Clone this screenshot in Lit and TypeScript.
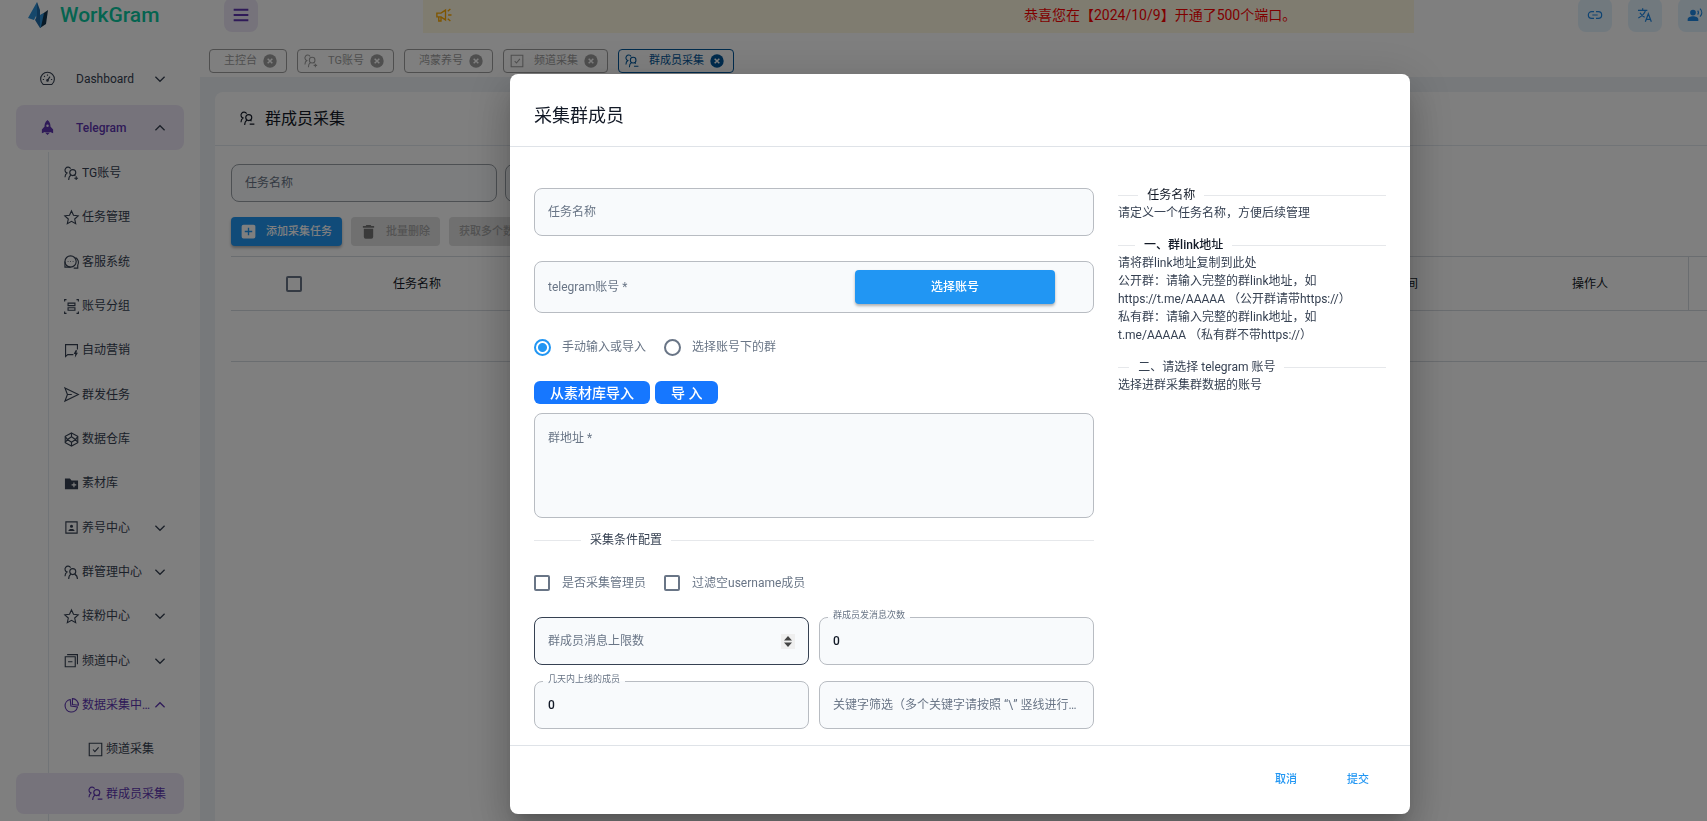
import { LitElement, html, css, svg, nothing } from "lit";
import { customElement, property, state } from "lit/decorators.js";
import { classMap } from "lit/directives/class-map.js";

const person = svg`
  <path d="M10.500 4.200a4.800 4.800 0 1 0-5.700 7C2.900 12.500 1.600 14.500 1.600 18"/>
  <circle cx="14" cy="10.500" r="4.800"/>
  <path d="M11.300 14.600c-2.300 1.200-3.800 3.600-3.800 7.900"/>`;

const ICONS: Record<string, unknown> = {
  gauge: svg`<path d="M5 21.500a11 11 0 1 1 14 0zM12 15l4-6M4.500 13.500h2M12 5.500v2M6.500 8l1.300 1.300M17.500 13.500h2"/><circle cx="12" cy="15" r="1.200"/>`,
  rocket: svg`<path class="solid" d="M12 0c4 3 5 7 4.700 10.500l4.300 4.500v6l-4.800-2H7.800L3 21v-6l4.300-4.500C7 7 8 3 12 0zm0 7a2 2 0 1 0 0 4 2 2 0 0 0 0-4zM8 20h8l-4 4z"/>`,
  userPlus: svg`${person}<path d="M16.300 14.500c.8.400 1.300.8 1.800 1.300M19.500 16.500v6M16.500 19.500h6"/>`,
  userMinus: svg`${person}<path d="M16.300 14.500c.9.500 1.500 1.100 2 2M15.500 21h7.500"/>`,
  users: svg`${person}<path d="M17 14.600c2.500 1.200 4.500 4 4.500 7.900"/>`,
  star: svg`<path d="M12 1.500l3.200 6.900 7.500.9-5.600 5.100 1.600 7.500L12 18.100l-6.700 3.800 1.600-7.500L1.300 9.300l7.500-.9z"/>`,
  chat: svg`<circle cx="10.500" cy="12" r="9"/><path d="M1.500 12v9h9M18.500 5.500c5 3 5.500 9 3.500 12.500v4.500h-6.500"/><path d="M6 12h1M10 12h1M14 12h1"/>`,
  group: svg`<path d="M6.500 6.500h11v4h-11zM6.500 14h11v4h-11z"/><path d="M1 4V1H4M20 1h3V4M23 20v3H20M4 23H1V20"/>`,
  promo: svg`<path d="M21.500 10.500V2.500H2.500v19l3.500-3h9"/><path class="solid" d="M18.500 11.500l-3 6h2.500l-.7 6 5-8h-2.500l1.200-4z"/>`,
  send: svg`<path d="M1.500 1.500L23 12 1.500 22.500 5.500 12zM5.500 12h7"/>`,
  gem: svg`<path d="M12 1.500l10 5.500v10L12 22.500 2 17V7z"/><path d="M12 7.500l6.500 4.500-6.500 4.500L5.500 12zM12 1.500v6M12 16.500v6M2 7.500L5.500 12 2 16.500M22 7.500L18.500 12l3.500 4.500"/>`,
  folder: svg`<path class="solid" fill-rule="evenodd" d="M1.500 4h8l2.500 3h10.500v14h-21zM15 10.500v2.800h-2.800v1.800H15v2.800h1.800v-2.800h2.800v-1.800h-2.800v-2.800z"/>`,
  badge: svg`<path d="M3 3h18v18H3z"/><path class="solid" d="M12 7.500a2.500 2.500 0 1 1 0 5 2.500 2.500 0 0 1 0-5zM7 17.500c.5-2.500 2-3.300 5-3.300s4.500.8 5 3.300z"/>`,
  stack: svg`<path d="M2 6h16v16H2zM5 2.500h16.500V18M6.500 14h7"/>`,
  pie: svg`<path d="M10 2.500a10 10 0 1 0 11.500 12L11 13zM13.500 1v9.500l9.500 1c.2-5.800-3.800-10.300-9.500-10.500z"/>`,
  check: svg`<path d="M2 2h20v20H2z"/><path d="M8 12l3 3.500L17 8.500"/>`,
  down: svg`<path class="bold" d="M1 6.500L12 17.500 23 6.500"/>`,
  up: svg`<path class="bold" d="M1 17.500L12 6.500 23 17.500"/>`,
  menu: svg`<path class="bold" d="M1 4h22M1 12h22M1 20h22"/>`,
  horn: svg`<path d="M2.500 9.500H8l6-4v13l-6-4H2.500zM5 14.500V20h3v-5.500M17.500 12H22M17 7l3.500-3M17 17l3.500 3"/>`,
  link: svg`<path d="M10.500 7H7a5 5 0 0 0 0 10h3.500M13.500 7H17a5 5 0 0 1 0 10h-3.500M8 12h8"/>`,
  translate: svg`<path d="M1.500 5h14M8.500 2v3M12.800 5C11.500 9.500 7.500 13.500 2 16.500M4.500 8.500c1.500 3 4 5.500 7 7M12.500 22l4.500-12 4.500 12M14 18.500h6"/>`,
  voice: svg`<path class="solid" d="M9 4a4.300 4.300 0 1 1 0 8.600A4.300 4.300 0 0 1 9 4zM1 21v-2.500c0-3 4-4.500 8-4.500s8 1.500 8 4.500V21z"/><path d="M16 5.500c1.500 1.800 1.500 4 0 5.800M19.500 2.500c3.500 3.500 3.500 8.500 0 12"/>`,
  close: svg`<circle class="solid" cx="12" cy="12" r="11.500"/><path class="knock" d="M8 8l8 8M16 8l-8 8"/>`,
  add: svg`<path class="solid" fill-rule="evenodd" d="M4 1h16a3 3 0 0 1 3 3v16a3 3 0 0 1-3 3H4a3 3 0 0 1-3-3V4a3 3 0 0 1 3-3zM10.900 6v4.900H6v2.200h4.900V18h2.200v-4.900H18v-2.200h-4.900V6z"/>`,
  trash: svg`<path class="solid" d="M8.500 1.500h7l1 1.500H21v3H3V3h4.500zM4.500 7.500h15v13a3 3 0 0 1-3 3h-9a3 3 0 0 1-3-3z"/>`,
};

@customElement("ui-icon")
export class UiIcon extends LitElement {
  @property() name = "star";
  static styles = css`
    :host { display: inline-flex; flex: none; width: 15px; height: 15px; }
    svg { width: 100%; height: 100%; fill: none; stroke: currentColor; stroke-width: 1.800; overflow: visible; }
    .solid { fill: currentColor; stroke: none; }
    .bold { stroke-width: 3; }
    .knock { stroke: #fff; stroke-width: 2.600; }
  `;
  render() {
    return html`<svg viewBox="0 0 24 24" aria-hidden="true">${ICONS[this.name]}</svg>`;
  }
}

type NavItem = { label: string; icon: string; arrow?: "up" | "down"; nested?: boolean; tone?: "open" | "current" };

const NAV: NavItem[] = [
  { label: "TG账号", icon: "userPlus" },
  { label: "任务管理", icon: "star" },
  { label: "客服系统", icon: "chat" },
  { label: "账号分组", icon: "group" },
  { label: "自动营销", icon: "promo" },
  { label: "群发任务", icon: "send" },
  { label: "数据仓库", icon: "gem" },
  { label: "素材库", icon: "folder" },
  { label: "养号中心", icon: "badge", arrow: "down" },
  { label: "群管理中心", icon: "users", arrow: "down" },
  { label: "接粉中心", icon: "star", arrow: "down" },
  { label: "频道中心", icon: "stack", arrow: "down" },
  { label: "数据采集中心", icon: "pie", arrow: "up", tone: "open" },
  { label: "频道采集", icon: "check", nested: true },
  { label: "群成员采集", icon: "userMinus", nested: true, tone: "current" },
];

@customElement("app-sidebar")
export class AppSidebar extends LitElement {
  static styles = css`
    :host { display: flex; flex-direction: column; min-height: 100vh; box-sizing: border-box; background: #fff; color: #364152; font-size: 12px; line-height: 16px; }
    a { color: inherit; text-decoration: none; }
    .brand { display: flex; align-items: center; gap: 12px; height: 30px; padding-left: 28px; color: #0ac8a0; font-size: 21px; font-weight: 500; line-height: 30px; }
    .brand svg { width: 20px; height: 26px; }
    .top { display: grid; gap: 4px; padding: 26px 16px 0; }
    .entry { display: flex; align-items: center; gap: 21px; height: 45px; padding: 0 19px 0 24px; border-radius: 8px; }
    .entry span { flex: 1; }
    .entry.active { background: #ede7f6; color: #5e35b1; font-weight: 500; }
    .arrow { width: 10px; height: 10px; color: #364152; }
    .list { position: relative; flex: 1; display: grid; grid-template-columns: minmax(0, 1fr); grid-auto-rows: minmax(41px, 1fr); margin: 0; padding: 1px 16px 5px; list-style: none; }
    .list::before { content: ""; position: absolute; left: 48px; top: 2px; bottom: 0; width: 1px; background: #e3e8ef; }
    .list li { display: grid; grid-template-columns: minmax(0, 1fr); align-items: center; position: relative; }
    .item { display: flex; align-items: center; gap: 3px; height: 41px; padding: 0 19px 0 48px; border-radius: 8px; }
    .item span { flex: 1; min-width: 0; overflow: hidden; text-overflow: ellipsis; white-space: nowrap; }
    .nested { padding: 0 8px 0 72px; }
    .open, .open .arrow { color: #5e35b1; }
    .current { background: #ede7f6; color: #5e35b1; }
  `;
  render() {
    return html`
      <a class="brand" href="#">
        <svg viewBox="0 0 20 26" aria-hidden="true">
          <path fill="#2a8fd6" d="M9 0L0 16l6 2 2-4 3 8z" />
          <path fill="#1f6aa8" d="M9 0l3 8v18l-5-8 2-4z" />
          <path fill="#12344f" d="M20 8l-7 5-1 13 6-4z" />
          <path fill="#2a8fd6" d="M12 13l4-2-3 14-1 1z" />
        </svg>
        WorkGram
      </a>
      <nav class="top" aria-label="main">
        <a class="entry" href="#"><ui-icon name="gauge"></ui-icon><span>Dashboard</span><ui-icon class="arrow" name="down"></ui-icon></a>
        <a class="entry active" href="#"><ui-icon name="rocket"></ui-icon><span>Telegram</span><ui-icon class="arrow" name="up"></ui-icon></a>
      </nav>
      <ul class="list">
        ${NAV.map(
          (n) => html`<li>
            <a href="#" class=${classMap({ item: true, nested: !!n.nested, open: n.tone === "open", current: n.tone === "current" })}>
              <ui-icon name=${n.icon}></ui-icon><span>${n.label}</span>
              ${n.arrow ? html`<ui-icon class="arrow" name=${n.arrow}></ui-icon>` : nothing}
            </a>
          </li>`,
        )}
      </ul>
    `;
  }
}

const TABS = [
  { label: "主控台", icon: "" },
  { label: "TG账号", icon: "userPlus" },
  { label: "鸿蒙养号", icon: "" },
  { label: "频道采集", icon: "check" },
  { label: "群成员采集", icon: "userMinus", active: true },
];

@customElement("app-workspace")
export class AppWorkspace extends LitElement {
  static styles = css`
    :host { display: flex; flex-direction: column; min-width: 0; overflow: hidden; background: #eef2f6; color: #121926; font-size: 12px; line-height: 16px; }
    button { font: inherit; border: 0; cursor: pointer; }
    .bar { display: grid; grid-template-columns: 223px minmax(0, 1fr) 293px; grid-template-rows: 33px; align-items: end; background: #fff; }
    .square { display: grid; place-items: center; width: 34px; height: 34px; padding: 0; border-radius: 8px; background: #ede7f6; color: #5e35b1; margin-bottom: 1px; }
    .menu { margin-left: 24px; }
    .notice { display: flex; align-items: center; height: 33px; box-sizing: border-box; padding-bottom: 4px; background: #fff8e1; color: #f00; font-size: 14px; line-height: 20px; overflow: hidden; white-space: nowrap; }
    .horn { width: 18px; height: 18px; margin: 0 571px 0 12px; color: #ffab00; }
    .tools { display: flex; gap: 16px; justify-content: flex-end; margin-right: -5px; }
    .tools .square { background: #e3f2fd; color: #1e88e5; }
    .tools ui-icon, .menu ui-icon { width: 16px; height: 16px; }
    .tabs { display: flex; gap: 10px; padding: 16px 9px 4px; background: #fff; }
    .tab { display: flex; align-items: center; gap: 6px; height: 24px; box-sizing: border-box; padding: 0 9px 0 6px; border: 1px solid #9e9e9e; border-radius: 4px; color: #9e9e9e; font-size: 11px; }
    .tab .text { padding-left: 8px; }
    .tab ui-icon + .text { padding-left: 4px; }
    .tab.active { border-color: #01579b; color: #01579b; }
    .tab ui-icon { width: 14px; height: 14px; }
    .tab button { display: flex; padding: 0; background: none; color: inherit; }
    .card { flex: 1; margin: 15px 0 0 15px; border-radius: 8px 0 0 0; background: #fff; }
    .head { display: flex; align-items: center; gap: 10px; height: 53px; padding-left: 25px; border-bottom: 1px solid #e3e8ef; }
    h1 { margin: 0; font-size: 16px; font-weight: 400; line-height: 24px; }
    .filters { display: flex; gap: 8px; padding: 18px 16px 15px; }
    .filters input { width: 266px; height: 38px; box-sizing: border-box; padding: 0 13px; border: 1px solid #9aa0a6; border-radius: 8px; background: #f8fafc; font: inherit; }
    .filters input::placeholder { color: #697586; opacity: 1; }
    .actions { display: flex; gap: 9px; padding: 0 16px 10px; }
    .actions button { display: flex; align-items: center; gap: 10px; height: 29px; padding: 0 10px; border-radius: 4px; background: #2196f3; color: #fff; font-size: 11px; font-weight: 500; box-shadow: 0 2px 3px rgba(0, 0, 0, 0.3); white-space: nowrap; }
    .actions button:disabled { background: #e0e0e0; color: #a6a6a6; box-shadow: none; }
    .actions button:disabled ui-icon { color: #757575; }
    .scroll { margin-left: 16px; }
    table { width: 100%; border-collapse: collapse; table-layout: fixed; }
    th, td { padding: 0; border-bottom: 1px solid #d5dae0; text-align: center; font-weight: 400; }
    th { height: 53px; border-top: 1px solid #d5dae0; }
    td { height: 50px; }
    .pick { width: 126px; }
    .name { width: 120px; }
    .col { width: 196px; }
    .tail { width: 18px; border-left: 1px solid #d5dae0; }
    input[type="checkbox"] { appearance: none; display: block; width: 16px; height: 16px; margin: auto; border: 2px solid #697586; border-radius: 2px; background: #fff; }
  `;
  render() {
    return html`
      <header class="bar">
        <button class="square menu" aria-label="menu"><ui-icon name="menu"></ui-icon></button>
        <div class="notice"><ui-icon class="horn" name="horn"></ui-icon><span>恭喜您在【2024/10/9】开通了500个端口。</span></div>
        <div class="tools">
          ${["link", "translate", "voice"].map((i) => html`<button class="square" aria-label=${i}><ui-icon name=${i}></ui-icon></button>`)}
        </div>
      </header>
      <div class="tabs">
        ${TABS.map(
          (t) => html`<div class=${classMap({ tab: true, active: !!t.active })}>
            ${t.icon ? html`<ui-icon name=${t.icon}></ui-icon>` : nothing}<span class="text">${t.label}</span>
            <button aria-label="close"><ui-icon name="close"></ui-icon></button>
          </div>`,
        )}
      </div>
      <main class="card">
        <div class="head"><ui-icon name="userMinus"></ui-icon><h1>群成员采集</h1></div>
        <div class="filters">
          <input placeholder="任务名称" aria-label="任务名称" />
          <input aria-label="filter" />
        </div>
        <div class="actions">
          <button><ui-icon name="add"></ui-icon>添加采集任务</button>
          <button disabled><ui-icon name="trash"></ui-icon>批量删除</button>
          <button disabled>获取多个数据</button>
        </div>
        <div class="scroll">
          <table>
            <thead>
              <tr>
                <th class="pick"><input type="checkbox" aria-label="select all" /></th>
                <th class="name">任务名称</th><th></th><th class="col">创建时间</th><th class="col">操作人</th><th class="tail"></th>
              </tr>
            </thead>
            <tbody><tr><td colspan="6"></td></tr></tbody>
          </table>
        </div>
      </main>
    `;
  }
}

@customElement("ui-divider")
export class UiDivider extends LitElement {
  static styles = css`
    :host { display: flex; align-items: center; gap: 9px; white-space: nowrap; line-height: 18px; }
    :host::before, :host::after { content: ""; height: 1px; background: #e6e8eb; }
    :host::before { flex: 1 1 0; }
    :host::after { flex: 9 1 0; }
  `;
  render() {
    return html`<slot></slot>`;
  }
}

@customElement("collect-dialog")
export class CollectDialog extends LitElement {
  @state() private source = "manual";
  static styles = css`
    :host { display: flex; flex-direction: column; box-sizing: border-box; width: 900px; max-width: 100%; border-radius: 8px; background: #fff; color: #364152; font-size: 12px; line-height: 18px; box-shadow: 0 11px 15px -7px rgba(0, 0, 0, 0.2), 0 24px 38px 3px rgba(0, 0, 0, 0.14), 0 9px 46px 8px rgba(0, 0, 0, 0.12); }
    button, input, textarea { font: inherit; }
    button { border: 0; cursor: pointer; }
    h2 { margin: 0; padding: 29px 24px 17px; color: #121926; font-size: 18px; font-weight: 400; line-height: 26px; }
    .body { display: grid; grid-template-columns: 560fr 268fr; gap: 24px; padding: 41px 24px 16px; border-top: 1px solid #dfe3e8; border-bottom: 1px solid #dfe3e8; color: #697586; }
    .field { position: relative; display: flex; align-items: center; height: 48px; box-sizing: border-box; border: 1px solid #b8bcc2; border-radius: 8px; background: #f8fafc; }
    .field label { position: absolute; left: 13px; right: 11px; overflow: hidden; text-overflow: ellipsis; white-space: nowrap; pointer-events: none; }
    .field input, .field textarea { flex: 1; min-width: 0; height: 100%; box-sizing: border-box; padding: 0 13px; border: 0; outline: 0; background: none; color: #121926; font-weight: 500; resize: none; appearance: textfield; }
    input::-webkit-inner-spin-button { display: none; }
    .field .float { top: -12px; left: 8px; right: auto; padding: 0 5px; background: linear-gradient(#fff 11px, #f8fafc 11px); font-size: 9px; }
    .account { height: 52px; margin: 25px 0; padding-right: 38px; }
    .pickbtn { width: 200px; height: 34px; margin-bottom: 1px; border-radius: 4px; background: #2196f3; color: #fff; font-weight: 500; box-shadow: 0 2px 3px rgba(0, 0, 0, 0.3); }
    .choices { display: flex; gap: 18px; }
    .choices label { display: flex; align-items: center; gap: 11px; }
    .choices input { appearance: none; flex: none; box-sizing: border-box; width: 17px; height: 17px; margin: 0; border: 2px solid #697586; border-radius: 50%; }
    .choices input[type="checkbox"] { width: 16px; height: 16px; margin-right: 1px; border-radius: 2px; }
    .choices input[type="radio"]:checked { border-color: #2196f3; background: radial-gradient(#2196f3 4px, transparent 5px); }
    .imports { display: flex; gap: 5px; padding: 25px 0 9px; }
    .imports button { height: 23px; padding: 0 16px; border-radius: 6px; background: #1677ff; color: #fff; font-size: 14px; font-weight: 500; line-height: 20px; }
    .address { height: 105px; }
    .address label { top: 15px; }
    .form ui-divider { margin: 13px 0 25px; color: #364152; }
    .flags { padding-bottom: 25px; }
    .pair { display: grid; grid-template-columns: 1fr 1fr; gap: 16px 10px; }
    .focus { border-color: #364152; }
    .spin { position: absolute; right: 13px; width: 14px; height: 15px; background: #efefef; }
    .help { margin-top: -2px; color: #364152; }
    .help p { margin: 0 0 14px; padding-right: 8px; }
    .help ui-divider { color: #121926; }
    .help .strong { font-weight: 500; }
    .help .soft { color: #364152; }
    footer { display: flex; justify-content: flex-end; gap: 24px; padding: 16px 28px 17px; }
    footer button { width: 48px; height: 35px; padding: 0; background: none; color: #2196f3; font-size: 11px; font-weight: 500; }
  `;
  private num(id: string, label: string, value: string) {
    return html`<div class="field"><label class="float" for=${id}>${label}</label><input id=${id} type="number" .value=${value} /></div>`;
  }
  private radio(value: string, label: string) {
    return html`<label><input type="radio" name="source" .checked=${this.source === value} @change=${() => (this.source = value)} />${label}</label>`;
  }
  render() {
    return html`
      <h2>采集群成员</h2>
      <div class="body">
        <form class="form">
          <div class="field"><label for="task">任务名称</label><input id="task" /></div>
          <div class="field account">
            <label for="account">telegram账号 *</label><input id="account" />
            <button type="button" class="pickbtn">选择账号</button>
          </div>
          <div class="choices">${this.radio("manual", "手动输入或导入")}${this.radio("account", "选择账号下的群")}</div>
          <div class="imports"><button type="button">从素材库导入</button><button type="button">导 入</button></div>
          <div class="field address"><label for="address">群地址 *</label><textarea id="address"></textarea></div>
          <ui-divider>采集条件配置</ui-divider>
          <div class="choices flags">
            <label><input type="checkbox" />是否采集管理员</label>
            <label><input type="checkbox" />过滤空username成员</label>
          </div>
          <div class="pair">
            <div class="field focus">
              <label for="limit">群成员消息上限数</label><input id="limit" type="number" />
              <svg class="spin" viewBox="0 0 14 15" aria-hidden="true"><path fill="#444" d="M3 6.500L7 2l4 4.500zM3 8.500L7 13l4-4.500z" /></svg>
            </div>
            ${this.num("times", "群成员发消息次数", "0")} ${this.num("days", "几天内上线的成员", "0")}
            <div class="field"><label for="words">关键字筛选（多个关键字请按照 “\\” 竖线进行分割）</label><input id="words" /></div>
          </div>
        </form>
        <aside class="help">
          <ui-divider>任务名称</ui-divider>
          <p>请定义一个任务名称，方便后续管理</p>
          <ui-divider class="strong">一、群link地址</ui-divider>
          <p>请将群link地址复制到此处<br />公开群：请输入完整的群link地址，如<br />https://t.me/AAAAA （公开群请带https://）<br />私有群：请输入完整的群link地址，如<br />t.me/AAAAA （私有群不带https://）</p>
          <ui-divider class="soft">二、请选择 telegram 账号</ui-divider>
          <p>选择进群采集群数据的账号</p>
        </aside>
      </div>
      <footer><button>取消</button><button>提交</button></footer>
    `;
  }
}

@customElement("app-root")
export class AppRoot extends LitElement {
  static styles = css`
    :host { display: block; height: 100vh; overflow: hidden; font-family: Roboto, "Noto Sans CJK SC", sans-serif; }
    .shell { display: grid; grid-template-columns: 200px minmax(0, 1fr); min-height: 100vh; }
    .backdrop { position: fixed; inset: 0; display: flex; justify-content: center; align-items: flex-start; box-sizing: border-box; padding: 74px 0 6px 213px; background: rgba(0, 0, 0, 0.5); overflow: hidden; }
  `;
  render() {
    return html`
      <div class="shell"><app-sidebar></app-sidebar><app-workspace></app-workspace></div>
      <div class="backdrop"><collect-dialog role="dialog" aria-label="采集群成员"></collect-dialog></div>
    `;
  }
}
